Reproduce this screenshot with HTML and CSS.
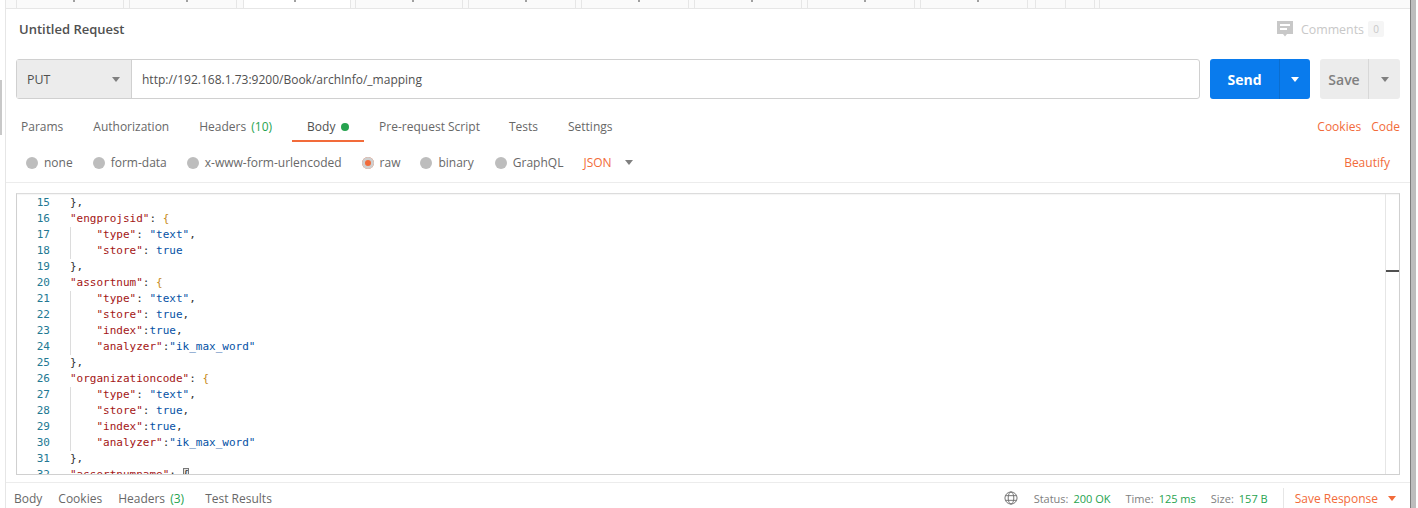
FILE: index.html
```html
<!DOCTYPE html>
<html lang="en">
<head>
<meta charset="utf-8">
<title>Untitled Request</title>
<link rel="stylesheet" href="styles.css">
</head>
<body>
<div class="app">
  <aside class="side"><div class="side-thumb"></div></aside>
  <main class="main">
    <div class="tabs">
      <div class="tab"></div>
      <div class="tab"></div>
      <div class="tab active"></div>
      <div class="tab"></div>
      <div class="tab"></div>
      <div class="tab"></div>
      <div class="tab"></div>
      <div class="tab"></div>
      <div class="tab"></div>
      <div class="tab small first"></div>
      <div class="tab small"></div>
      <div class="tab rest"></div>
    </div>

    <div class="title-row">
      <div class="title">Untitled Request</div>
      <div class="comments">
        <svg class="comment-icon" width="16" height="16" viewBox="0 0 16 16"><path d="M0 0H16V13H10L8 15.500 6 13H0Z" fill="#c8c8c8"/><path d="M3 3H13V5H3ZM3 7H10V9H3Z" fill="#fff"/></svg>
        <span>Comments</span><span class="count">0</span>
      </div>
    </div>

    <div class="url-row">
      <div class="url-box">
        <div class="method"><span>PUT</span><i class="caret gray"></i></div>
        <div class="url">http://192.168.1.73:9200/Book/archInfo/_mapping</div>
      </div>
      <div class="send"><span class="send-label">Send</span><span class="send-drop"><i class="caret white"></i></span></div>
      <div class="save"><span class="save-label">Save</span><span class="save-drop"><i class="caret gray"></i></span></div>
    </div>

    <div class="req-tabs">
      <span class="rt">Params</span>
      <span class="rt">Authorization</span>
      <span class="rt">Headers <em class="green">(10)</em></span>
      <span class="rt rt-active">Body <b class="dot"></b></span>
      <span class="rt">Pre-request Script</span>
      <span class="rt">Tests</span>
      <span class="rt">Settings</span>
      <span class="links"><span class="link">Cookies</span><span class="link">Code</span></span>
    </div>

    <div class="body-opts">
      <label class="opt"><i class="radio"></i>none</label>
      <label class="opt"><i class="radio"></i>form-data</label>
      <label class="opt"><i class="radio"></i>x-www-form-urlencoded</label>
      <label class="opt"><i class="radio on"></i>raw</label>
      <label class="opt"><i class="radio"></i>binary</label>
      <label class="opt"><i class="radio"></i>GraphQL</label>
      <span class="json">JSON</span><i class="caret gray json-caret"></i>
      <span class="beautify">Beautify</span>
    </div>

    <div class="editor-wrap">
      <div class="editor">
        <div class="code">
          <div class="ln"><span class="n">15</span><span class="c">},</span></div>
          <div class="ln"><span class="n">16</span><span class="c"><span class="k">"engprojsid"</span>: <span class="br">{</span></span></div>
          <div class="ln"><span class="n">17</span><span class="c g">    <span class="k">"type"</span>: <span class="s">"text"</span>,</span></div>
          <div class="ln"><span class="n">18</span><span class="c g">    <span class="k">"store"</span>: <span class="s">true</span></span></div>
          <div class="ln"><span class="n">19</span><span class="c">},</span></div>
          <div class="ln"><span class="n">20</span><span class="c"><span class="k">"assortnum"</span>: <span class="br">{</span></span></div>
          <div class="ln"><span class="n">21</span><span class="c g">    <span class="k">"type"</span>: <span class="s">"text"</span>,</span></div>
          <div class="ln"><span class="n">22</span><span class="c g">    <span class="k">"store"</span>: <span class="s">true</span>,</span></div>
          <div class="ln"><span class="n">23</span><span class="c g">    <span class="k">"index"</span>:<span class="s">true</span>,</span></div>
          <div class="ln"><span class="n">24</span><span class="c g">    <span class="k">"analyzer"</span>:<span class="s">"ik_max_word"</span></span></div>
          <div class="ln"><span class="n">25</span><span class="c">},</span></div>
          <div class="ln"><span class="n">26</span><span class="c"><span class="k">"organizationcode"</span>: <span class="br">{</span></span></div>
          <div class="ln"><span class="n">27</span><span class="c g">    <span class="k">"type"</span>: <span class="s">"text"</span>,</span></div>
          <div class="ln"><span class="n">28</span><span class="c g">    <span class="k">"store"</span>: <span class="s">true</span>,</span></div>
          <div class="ln"><span class="n">29</span><span class="c g">    <span class="k">"index"</span>:<span class="s">true</span>,</span></div>
          <div class="ln"><span class="n">30</span><span class="c g">    <span class="k">"analyzer"</span>:<span class="s">"ik_max_word"</span></span></div>
          <div class="ln"><span class="n">31</span><span class="c">},</span></div>
          <div class="ln"><span class="n">32</span><span class="c"><span class="k">"assortnumname"</span>: <span class="br box">{</span></span></div>
        </div>
        <div class="minimap"><div class="mark"></div></div>
      </div>
    </div>

    <div class="status-bar">
      <span class="res-tab">Body</span>
      <span class="res-tab">Cookies</span>
      <span class="res-tab">Headers <em class="green">(3)</em></span>
      <span class="res-tab">Test Results</span>
      <div class="res-meta">
        <svg class="globe" width="14" height="14" viewBox="0 0 15 15" fill="none" stroke="#6e6e6e"><circle cx="7.500" cy="7.500" r="6.500"/><ellipse cx="7.500" cy="7.500" rx="3" ry="6.500"/><path d="M1.500 5H13.500M1.500 10H13.500"/></svg>
        <span class="meta">Status:<em class="green">200 OK</em></span>
        <span class="meta">Time:<em class="green">125 ms</em></span>
        <span class="meta">Size:<em class="green">157 B</em></span>
        <span class="save-res">Save Response<i class="caret orange"></i></span>
      </div>
    </div>
  </main>
  <div class="right-rail"></div>
</div>
</body>
</html>
```
FILE: styles.css
```css
* { box-sizing: border-box; }
html, body { margin: 0; height: 100%; overflow: hidden; background: #fff; }
body { font-family: "Open Sans", "Noto Sans", sans-serif; font-size: 12px; color: #505050; }
em { font-style: normal; }

.app { display: flex; width: 1418px; height: 508px; }

.side { width: 6px; flex: none; border-right: 1px solid #e6e6e6; padding-top: 80px; background: #fff; }
.side-thumb { width: 2px; height: 55px; background: #c8c8c8; }

.main { width: 1404px; flex: none; display: flex; flex-direction: column; }

.right-rail { width: 6px; flex: none; background: #bdbdbd; border-left: 1px solid #7d7d7d; }

.tabs { height: 9px; display: flex; flex: none; background: #fafafa; border-bottom: 1px solid #e6e6e6; padding-left: 10px; overflow: hidden; }
.tab { width: 108px; flex: none; height: 8px; margin-right: 5px; border-left: 1px solid #e6e6e6; border-right: 1px solid #e6e6e6; position: relative; }
.tab::after { content: ""; position: absolute; left: 56px; top: 0; width: 2px; height: 2px; background: #a0a0a0; }
.tab.active { background: #fff; height: 9px; margin-left: 1px; margin-right: 4px; }
.tab.active::after { left: 50px; }
.tab.small { width: 30px; margin-right: 0; }
.tab.small::after, .tab.rest::after { display: none; }
.tab.first { margin-left: 2px; border-right: 0; }
.tab.rest { margin-left: 4px; width: 20px; border-right: 0; }

.title-row { height: 40px; flex: none; display: flex; align-items: center; justify-content: space-between; padding: 0 26px 0 13px; }
.title { font-size: 13px; font-weight: 600; color: #505050; }
.comments { display: flex; align-items: center; color: #c8c8c8; font-size: 12.400px; }
.comment-icon { margin-right: 8px; }
.count { margin-left: 4px; width: 16px; height: 16px; background: #f5f5f5; border-radius: 2px; font-size: 10px; line-height: 16px; text-align: center; }

.url-row { height: 41px; flex: none; margin-top: 10px; display: flex; padding: 0 10px; }
.url-box { flex: none; width: 1184px; height: 40px; display: flex; border: 1px solid #d0d0d0; border-radius: 3px; background: #fff; }
.method { width: 115px; flex: none; display: flex; align-items: center; justify-content: space-between; padding: 0 11px 0 10px; background: #ececec; border-right: 1px solid #d0d0d0; font-size: 12.400px; color: #505050; }
.url { flex: 1; line-height: 39px; padding-left: 10px; font-size: 12px; color: #505050; }

.caret { display: inline-block; width: 0; height: 0; border-left: 4px solid transparent; border-right: 4px solid transparent; border-top: 5px solid #808080; }
.caret.white { border-top-color: #fff; }
.caret.orange { border-top-color: #f26b3a; margin-left: 10px; }

.send { flex: none; width: 100px; height: 40px; margin-left: 10px; display: flex; background: #097bed; border-radius: 3px; color: #fff; font-size: 14px; font-weight: 700; }
.send-label { width: 70px; text-align: center; line-height: 41px; border-right: 1px solid #0a6ed0; }
.send-drop { flex: 1; display: flex; align-items: center; justify-content: center; }
.save { flex: none; width: 80px; height: 40px; margin-left: 10px; display: flex; background: #ececec; border-radius: 3px; color: #808080; font-size: 14px; font-weight: 600; }
.save-label { width: 49px; text-align: center; line-height: 41px; border-right: 1px solid #d8d8d8; }
.save-drop { flex: 1; display: flex; align-items: center; justify-content: center; }

.req-tabs { height: 50px; flex: none; display: flex; align-items: flex-start; padding: 0 10px 0 15px; font-size: 12px; color: #686868; margin-top: 1px; }
.rt { padding-top: 18px; margin-right: 30px; white-space: nowrap; line-height: 16px; height: 41px; }
.rt:nth-child(3) { margin-right: 20px; }
.rt:nth-child(5) { margin-right: 29px; }
.rt .green, .res-tab .green { margin-left: 2px; }
.rt-active { color: #505050; padding: 18px 8px 0 15px; margin-right: 15px; border-bottom: 2px solid #f26b3a; width: 72px; }
.dot { display: inline-block; width: 8px; height: 8px; border-radius: 50%; background: #26a34f; margin-left: 2px; }
.green { color: #26a34f; }
.links { margin-left: auto; padding-top: 18px; line-height: 16px; display: flex; gap: 10px; color: #f26b3a; }

.body-opts { height: 32px; flex: none; display: flex; align-items: center; padding: 0 20px 8px 20px; border-bottom: 1px solid #ececec; color: #686868; font-size: 12px; }
.opt { display: flex; align-items: center; margin-right: 20px; white-space: nowrap; }
.opt:nth-child(5) { margin-right: 21px; }
.radio { width: 12px; height: 12px; border-radius: 50%; background: #bdbdbd; margin-right: 6px; flex: none; }
.radio.on { background: #f26b3a; box-shadow: inset 0 0 0 3px #cfcfcf; }
.json { color: #f26b3a; }
.json-caret { margin-left: 13px; }
.beautify { margin-left: auto; color: #f26b3a; }

.editor-wrap { flex: 1; min-height: 0; padding: 10px 10px 8px; border-bottom: 1px solid #ececec; }
.editor { height: 282px; display: flex; border: 1px solid #d0d0d0; border-top-color: #dcdcdc; overflow: hidden; background: #fff; box-shadow: inset 0 1px 1px rgba(0, 0, 0, .04); }
.code { flex: 1; padding-top: 1px; font-family: "DejaVu Sans Mono", "Liberation Mono", monospace; font-size: 11px; line-height: 16px; color: #333; overflow: hidden; }
.ln { height: 16px; display: flex; white-space: pre; }
.n { width: 33px; flex: none; text-align: right; color: #237893; }
.c { margin-left: 20px; }
.c.g { box-shadow: inset 1px 0 0 #dcdcdc; }
.k { color: #a31515; }
.s { color: #0451a5; }
.br { color: #c78a20; }
.box { background: #e4e4e4; outline: 1px solid #777; outline-offset: -1px; color: #333; }
.minimap { width: 14px; flex: none; border-left: 1px solid #e6e6e6; padding-top: 76px; }
.mark { height: 2px; background: #505050; }

.status-bar { height: 25px; flex: none; display: flex; align-items: center; padding: 5px 0 0 8px; color: #686868; font-size: 12px; }
.res-tab { margin-right: 16px; white-space: nowrap; }
.res-tab:nth-child(3) { margin-right: 21px; }
.res-meta { margin-left: auto; display: flex; align-items: center; padding-right: 14px; font-size: 11px; color: #808080; }
.globe { margin-right: 16px; }
.meta { margin-right: 15px; }
.meta em { margin-left: 5px; }
.save-res { height: 20px; display: flex; align-items: center; border-left: 1px solid #e6e6e6; padding-left: 11px; color: #f26b3a; font-size: 12px; }
```
